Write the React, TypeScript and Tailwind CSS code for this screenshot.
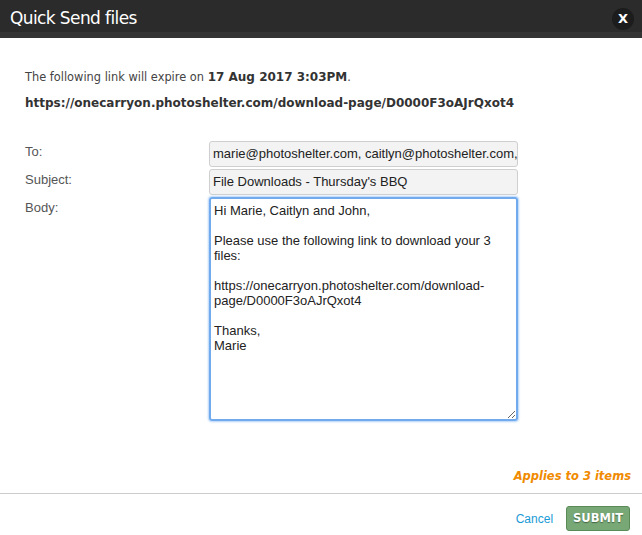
import { useState } from 'react';

const body = `Hi Marie, Caitlyn and John,

Please use the following link to download your 3 files:

https://onecarryon.photoshelter.com/download-page/D0000F3oAJrQxot4

Thanks,
Marie`;

export default function App() {
  const [text, setText] = useState(body);

  return (
    <div className="w-[642px] h-[535px] bg-white flex flex-col overflow-hidden font-['DejaVu_Sans',sans-serif]">
      {/* Header */}
      <div className="h-[38px] bg-[#2b2b2b] border-b-[6px] border-[#343434] flex items-center justify-between pl-[10px] pr-[8px] pt-[5px] shrink-0">
        <h1 className="text-white text-[17px] tracking-[-0.6px]">Quick Send files</h1>
        <button className="w-[22px] h-[22px] rounded-full bg-[#1c1c1c] text-white text-[13px] font-bold flex items-center justify-center leading-none">
          X
        </button>
      </div>

      {/* Content */}
      <div className="flex-1 px-[25px] pt-[31px]">
        <p className="text-[11.4px] text-[#444] leading-[16px]">
          The following link will expire on <b className="text-[#333] text-[12px]">17 Aug 2017 3:03PM</b>.
        </p>
        <p className="text-[12px] font-bold text-[#333] mt-[10px] leading-[16px]">
          https://onecarryon.photoshelter.com/download-page/D0000F3oAJrQxot4
        </p>

        <div className="mt-[30px] grid grid-cols-[184px_309px] gap-y-[2px] font-['Liberation_Sans',sans-serif] text-[13px] text-[#555]">
          <label className="pt-[1px]">To:</label>
          <div className="h-[26px] bg-[#f3f3f3] border border-[#cfcfcf] rounded-[3px] px-[3px] flex items-center text-[#222] whitespace-nowrap overflow-hidden">
            marie@photoshelter.com, caitlyn@photoshelter.com,
          </div>
          <label className="pt-[1px]">Subject:</label>
          <div className="h-[26px] bg-[#f3f3f3] border border-[#cfcfcf] rounded-[3px] px-[3px] flex items-center text-[#222]">
            File Downloads - Thursday's BBQ
          </div>
          <label className="pt-[1px]">Body:</label>
          <textarea
            value={text}
            onChange={(e) => setText(e.target.value)}
            className="h-[224px] border-2 border-[#72aaee] rounded-[3px] px-[3px] py-[4px] text-[13px] leading-[15px] text-[#222] outline-none shadow-[0_0_2px_1px_#b3d3f8]"
          />
        </div>
      </div>

      {/* Footer */}
      <div className="text-right pr-[11px] pb-[8px] text-[11.5px] font-bold italic text-[#f08a00]">
        Applies to 3 items
      </div>
      <div className="h-[42px] border-t border-[#ccc] flex items-start justify-end gap-[13px] pr-[12px] pt-[12px] shrink-0">
        <a className="text-[12px] text-[#1b9ad6] font-['Liberation_Sans',sans-serif] mt-[4px]">Cancel</a>
        <button className="h-[25px] px-[6px] bg-[#78a876] border border-[#5b8a59] rounded-[3px] text-white text-[11.5px] font-bold [text-shadow:0_1px_1px_#446644]">
          SUBMIT
        </button>
      </div>
    </div>
  );
}
